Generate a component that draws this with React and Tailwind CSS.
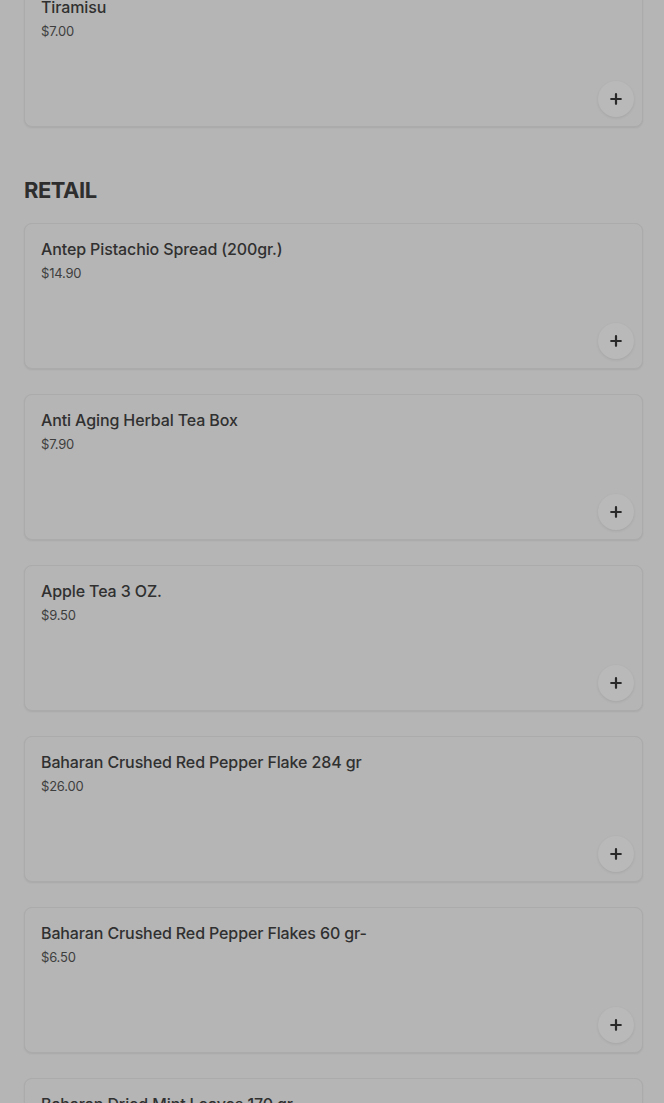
import React from "react";

const retail = [
    { name: "Antep Pistachio Spread (200gr.)", price: "$14.90" },
    { name: "Anti Aging Herbal Tea Box", price: "$7.90" },
    { name: "Apple Tea 3 OZ.", price: "$9.50" },
    { name: "Baharan Crushed Red Pepper Flake 284 gr", price: "$26.00" },
    { name: "Baharan Crushed Red Pepper Flakes 60 gr-", price: "$6.50" },
    { name: "Baharan Dried Mint Leaves 170 gr", price: "$9.90" },
];

function PlusIcon() {
    return (
        <svg width="12" height="12" viewBox="0 0 12 12" fill="none">
            <path
                d="M6 1.2v9.6M1.2 6h9.6"
                stroke="#2a2a2a"
                strokeWidth="2.2"
                strokeLinecap="round"
            />
        </svg>
    );
}

function ItemCard({ name, price, className = "" }) {
    return (
        <div
            className={`flex h-[146px] flex-col rounded-lg border border-[#ababab] bg-[#b5b5b5] shadow-[0_1px_2px_rgba(0,0,0,0.07)] ${className}`}
        >
            <div className="px-4 pt-[15px]">
                <div className="text-[16px] leading-5 font-medium tracking-[-0.12px] text-[#303030]">
                    {name}
                </div>
                <div className="mt-[5px] text-[13px] leading-[18px] tracking-[-0.2px] text-[#3e3e3e]">
                    {price}
                </div>
            </div>
            <div className="mt-auto flex justify-end pr-[8px] pb-[9px]">
                <button className="flex h-9 w-9 items-center justify-center rounded-full bg-[#b9b9b9] shadow-[0_1px_3px_rgba(0,0,0,0.09)]">
                    <PlusIcon />
                </button>
            </div>
        </div>
    );
}

export default function App() {
    return (
        <div
            className="min-h-screen overflow-hidden bg-[#b5b5b5] pl-6 pr-[21px]"
            style={{ fontFamily: "Inter, 'Noto Sans', sans-serif" }}
        >
            <ItemCard name="Tiramisu" price="$7.00" className="mt-[-19px]" />

            <h2 className="mt-[49px] mb-[19px] text-[22px] leading-7 font-bold tracking-[-0.5px] text-[#2e2e2e]">
                RETAIL
            </h2>

            <div className="flex flex-col gap-[25px]">
                {retail.map((item) => (
                    <ItemCard key={item.name} name={item.name} price={item.price} />
                ))}
            </div>
        </div>
    );
}
